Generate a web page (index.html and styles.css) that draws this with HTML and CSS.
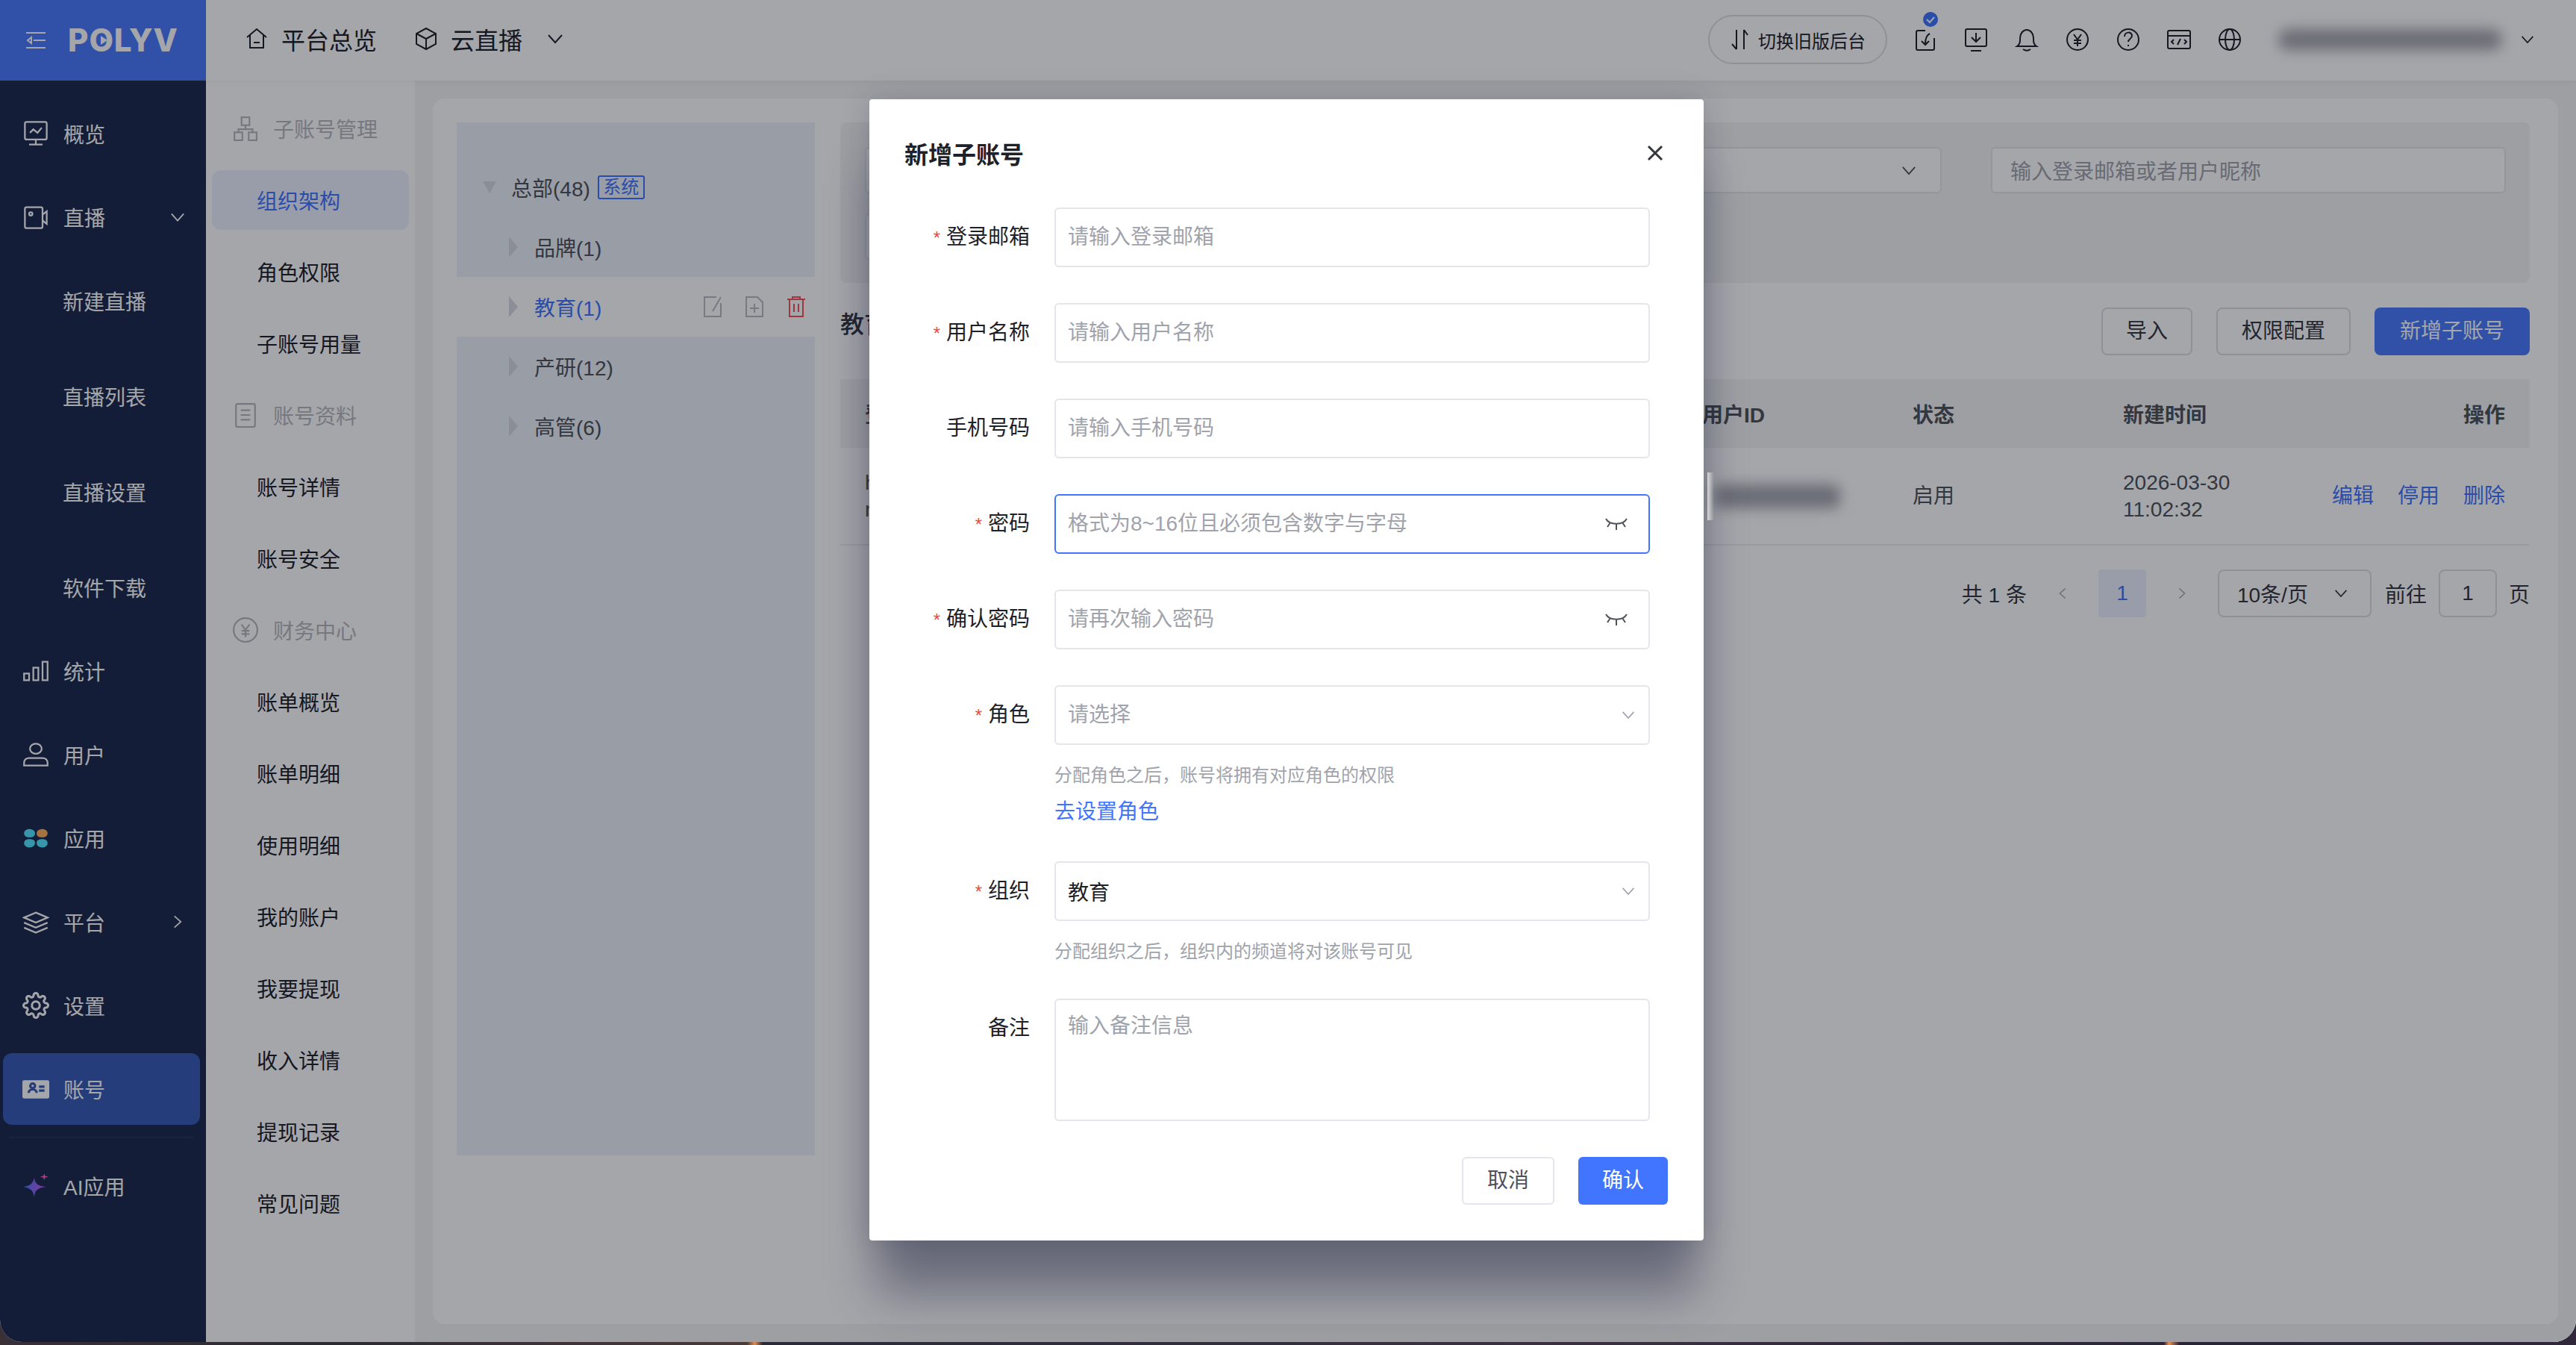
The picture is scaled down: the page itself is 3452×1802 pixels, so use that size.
FILE: index.html
```html
<!DOCTYPE html>
<html>
<head>
    <meta charset="utf-8" />
    <title>子账号管理</title>
    <link rel="stylesheet" href="styles.css">
</head>
<body>
    <svg class="defs" width="0" height="0">
        <defs>
            <symbol id="chev" viewBox="0 0 22 14"><path d="M2 2l9 10 9-10" /></symbol>
            <symbol id="chevr" viewBox="0 0 14 22"><path d="M2 2l10 9-10 9" /></symbol>
            <symbol id="eye" viewBox="0 0 30 18"><path d="M1 2c5 9 23 9 28 0M15 9v8M7 7l-4 6M23 7l4 6" /></symbol>
            <linearGradient id="star" x1="0" y1="0" x2="1" y2="0">
                <stop offset="0" stop-color="#4a7dff" />
                <stop offset="1" stop-color="#d050f0" />
            </linearGradient>
        </defs>
    </svg>

    <div class="window">
        <div class="app">
            <aside class="nav">
                <div class="brand">
                    <svg class="ic-menu" viewBox="0 0 26 22"><path d="M0 1h26M0 21h26M10 11h16M7 7l-5 4 5 4z" /></svg>
                    <span class="logo">POLYV</span>
                </div>
                <div class="nav-list">
                    <div class="nav-item">
                        <svg class="ic" viewBox="0 0 32 32"><rect x="3" y="2" width="26" height="21" rx="2" /><path d="M16 23v6M8 29h16M9 15l4-4 5 4 5-6" /></svg>
                        概览
                    </div>
                    <div class="nav-item">
                        <svg class="ic" viewBox="0 0 32 32"><rect x="3" y="4" width="21" height="25" rx="2" /><circle cx="10" cy="12" r="2" /><path d="M24 13l5-4v15l-5-4" /></svg>
                        直播
                        <svg class="nav-arrow"><use href="#chev" /></svg>
                    </div>
                    <div class="nav-sub">
                        <div class="nav-item sub">新建直播</div>
                        <div class="nav-item sub">直播列表</div>
                        <div class="nav-item sub">直播设置</div>
                        <div class="nav-item sub">软件下载</div>
                    </div>
                    <div class="nav-item">
                        <svg class="ic" viewBox="0 0 32 32"><rect x="2" y="19" width="6" height="8" /><rect x="13" y="12" width="6" height="15" /><rect x="24" y="5" width="6" height="22" /></svg>
                        统计
                    </div>
                    <div class="nav-item">
                        <svg class="ic" viewBox="0 0 32 32"><ellipse cx="16" cy="9" rx="7" ry="6" /><path d="M2 29v-3c0-4 3-6 6-6h16c3 0 6 2 6 6v3z" /></svg>
                        用户
                    </div>
                    <div class="nav-item">
                        <svg class="ic-fill" viewBox="0 0 32 32">
                            <path class="teal" d="M2 10c0-3 3-5 6-5 4 0 7 2 7 5 0 3-1 5-7 5-4 0-6-2-6-5z" />
                            <path class="orange" d="M17 10c0-3 3-5 7-5 3 0 6 2 6 5 0 3-2 5-6 5-6 0-7-2-7-5z" />
                            <path class="teal" d="M2 22c0-3 2-5 6-5 6 0 7 2 7 5 0 3-3 5-7 5-3 0-6-2-6-5z" />
                            <path class="teal" d="M17 22c0-3 1-5 7-5 4 0 6 2 6 5 0 3-3 5-6 5-4 0-7-2-7-5z" />
                        </svg>
                        应用
                    </div>
                    <div class="nav-item">
                        <svg class="ic" viewBox="0 0 32 32"><path d="M16 5l14 6-14 6-14-6zM2 17l14 6 14-6M2 23l14 6 14-6" /></svg>
                        平台
                        <svg class="nav-arrow side"><use href="#chevr" /></svg>
                    </div>
                    <div class="nav-item">
                        <svg class="ic" viewBox="0 0 24 24" stroke-width="1.5"><circle cx="12" cy="12" r="3.5" /><path d="M19.4 15a1.65 1.65 0 0 0 .33 1.82l.06.06a2 2 0 0 1 0 2.83 2 2 0 0 1-2.83 0l-.06-.06a1.65 1.65 0 0 0-1.82-.33 1.65 1.65 0 0 0-1 1.51V21a2 2 0 0 1-2 2 2 2 0 0 1-2-2v-.09A1.65 1.65 0 0 0 9 19.4a1.65 1.65 0 0 0-1.82.33l-.06.06a2 2 0 0 1-2.83 0 2 2 0 0 1 0-2.83l.06-.06a1.65 1.65 0 0 0 .33-1.82 1.65 1.65 0 0 0-1.51-1H3a2 2 0 0 1-2-2 2 2 0 0 1 2-2h.09A1.65 1.65 0 0 0 4.6 9a1.65 1.65 0 0 0-.33-1.82l-.06-.06a2 2 0 0 1 0-2.83 2 2 0 0 1 2.83 0l.06.06a1.65 1.65 0 0 0 1.82.33H9a1.65 1.65 0 0 0 1-1.51V3a2 2 0 0 1 2-2 2 2 0 0 1 2 2v.09a1.65 1.65 0 0 0 1 1.51 1.65 1.65 0 0 0 1.82-.33l.06-.06a2 2 0 0 1 2.83 0 2 2 0 0 1 0 2.83l-.06.06a1.65 1.65 0 0 0-.33 1.82V9a1.65 1.65 0 0 0 1.51 1H21a2 2 0 0 1 2 2 2 2 0 0 1-2 2h-.09a1.65 1.65 0 0 0-1.51 1z" /></svg>
                        设置
                    </div>
                    <div class="nav-item active">
                        <svg class="ic-fill" viewBox="0 0 34 32">
                            <rect class="card" x="0" y="5" width="34" height="23" rx="2" />
                            <path class="card-line" d="M8 21c0-6 10-6 10 0M13 9a3 3 0 1 0 .01 0M21 13h7M21 18h7" />
                        </svg>
                        账号
                    </div>
                    <div class="nav-line"></div>
                    <div class="nav-item">
                        <svg class="ic-fill" viewBox="0 0 32 32">
                            <path fill="url(#star)" d="M14 6c1 7 4 10 14 11-10 1-13 4-14 12-1-8-5-11-13-12 8-1 12-4 13-11z" />
                            <path class="pink" d="M26 1l1 3 4 1-4 1-1 3-1-3-4-1 4-1z" />
                        </svg>
                        AI应用
                    </div>
                </div>
            </aside>

            <div class="main-col">
                <header class="topbar">
                    <div class="top-link">
                        <svg class="ic" viewBox="0 0 32 32"><path d="M3 14L16 3l13 11M7 11v17h18V11M12 21h8" /></svg>
                        平台总览
                    </div>
                    <div class="top-link">
                        <svg class="ic" viewBox="0 0 32 32"><path d="M16 2l13 7v14l-13 7-13-7V9zM3 9l13 7 13-7M16 16v14" /></svg>
                        云直播
                        <svg class="top-arrow"><use href="#chev" /></svg>
                    </div>
                    <div class="top-right">
                        <div class="switch-btn">
                            <svg class="ic-sm" viewBox="0 0 24 30"><path d="M8 2v26M8 28l-6-7M18 28V2M18 2l5 7" /></svg>
                            切换旧版后台
                        </div>
                        <div class="top-icons">
                            <div class="top-icon task">
                                <svg class="ic" viewBox="0 0 32 32"><path d="M16 4H6a2 2 0 0 0-2 2v22a2 2 0 0 0 2 2h20a2 2 0 0 0 2-2V14M22 8c-4 2-6 6-6 14M11 18l5 5 5-5" /></svg>
                                <span class="check">
                                    <svg viewBox="0 0 20 20"><path d="M5 10l4 4 6-7" /></svg>
                                </span>
                            </div>
                            <div class="top-icon">
                                <svg class="ic" viewBox="0 0 32 32"><rect x="2" y="2" width="28" height="23" rx="2" /><path d="M16 7v12M10 13l6 6 6-6M9 31h14" /></svg>
                            </div>
                            <div class="top-icon">
                                <svg class="ic" viewBox="0 0 32 32"><path d="M3 25c3-2 4-4 4-8v-3c0-6 4-11 9-11s9 5 9 11v3c0 4 1 6 4 8zM11 29c3 2 7 2 10 0" /></svg>
                            </div>
                            <div class="top-icon">
                                <svg class="ic" viewBox="0 0 32 32"><circle cx="16" cy="16" r="14" /><path d="M11 9l5 7 5-7M16 16v9M11 17h10M11 21h10" /></svg>
                            </div>
                            <div class="top-icon">
                                <svg class="ic" viewBox="0 0 32 32"><circle cx="16" cy="16" r="14" /><path d="M11 12c0-7 10-7 10-1 0 4-5 4-5 8M16 23v2" /></svg>
                            </div>
                            <div class="top-icon">
                                <svg class="ic" viewBox="0 0 32 32"><rect x="1" y="4" width="30" height="24" rx="2" /><path d="M1 11h30M9 16l-3 3 3 3M23 16l3 3-3 3M18 15l-4 8" /></svg>
                            </div>
                            <div class="top-icon">
                                <svg class="ic" viewBox="0 0 32 32"><circle cx="16" cy="16" r="14" /><ellipse cx="16" cy="16" rx="6" ry="14" /><path d="M2 16h28" /></svg>
                            </div>
                        </div>
                        <div class="user-blur"></div>
                        <svg class="user-arrow"><use href="#chev" /></svg>
                    </div>
                </header>

                <div class="body">
                    <aside class="subnav">
                        <div class="sub-head">
                            <svg class="ic-head" viewBox="0 0 32 32"><rect x="11" y="2" width="10" height="10" /><rect x="2" y="21" width="10" height="10" /><rect x="20" y="21" width="10" height="10" /><path d="M16 12v5M7 21v-4h18v4" /></svg>
                            子账号管理
                        </div>
                        <div class="sub-item active">组织架构</div>
                        <div class="sub-item">角色权限</div>
                        <div class="sub-item">子账号用量</div>
                        <div class="sub-head">
                            <svg class="ic-head" viewBox="0 0 32 32"><rect x="4" y="2" width="24" height="29" rx="2" /><path d="M10 10h12M10 16h12M10 22h12" /></svg>
                            账号资料
                        </div>
                        <div class="sub-item">账号详情</div>
                        <div class="sub-item">账号安全</div>
                        <div class="sub-head">
                            <svg class="ic-head" viewBox="0 0 32 32"><circle cx="16" cy="16" r="15" /><path d="M11 9l5 7 5-7M16 16v9M11 17h10M11 21h10" /></svg>
                            财务中心
                        </div>
                        <div class="sub-item">账单概览</div>
                        <div class="sub-item">账单明细</div>
                        <div class="sub-item">使用明细</div>
                        <div class="sub-item">我的账户</div>
                        <div class="sub-item">我要提现</div>
                        <div class="sub-item">收入详情</div>
                        <div class="sub-item">提现记录</div>
                        <div class="sub-item">常见问题</div>
                    </aside>

                    <main class="content">
                        <div class="panel">
                            <div class="tree">
                                <div class="tree-row root">
                                    <span class="tri down"></span>
                                    总部(48)
                                    <span class="tag">系统</span>
                                </div>
                                <div class="tree-row"><span class="tri"></span>品牌(1)</div>
                                <div class="tree-row current">
                                    <span class="tri"></span>
                                    <span class="tree-name">教育(1)</span>
                                    <span class="tree-tools">
                                        <svg class="ic-tool" viewBox="0 0 26 30"><path d="M24 10v18H2V2h16M24 2L13 21" /></svg>
                                        <svg class="ic-tool" viewBox="0 0 26 30"><path d="M2 2h15l7 7v19H2zM13 11v12M7 17h12" /></svg>
                                        <svg class="ic-tool red" viewBox="0 0 26 30"><path d="M1 5h24M8 5V2h10v3M4 5v23h18V5M10 11v11M16 11v11" /></svg>
                                    </span>
                                </div>
                                <div class="tree-row"><span class="tri"></span>产研(12)</div>
                                <div class="tree-row"><span class="tri"></span>高管(6)</div>
                            </div>

                            <div class="list">
                                <div class="filter">
                                    <div class="filter-row">
                                        <div class="filter-box select">
                                            <svg class="box-arrow"><use href="#chev" /></svg>
                                        </div>
                                        <div class="filter-box search">输入登录邮箱或者用户昵称</div>
                                    </div>
                                    <div class="filter-row">
                                        <div class="filter-box short"></div>
                                    </div>
                                </div>

                                <div class="toolbar">
                                    <div class="list-title">教育</div>
                                    <div class="btn narrow">导入</div>
                                    <div class="btn">权限配置</div>
                                    <div class="btn primary">新增子账号</div>
                                </div>

                                <table class="grid">
                                    <tr>
                                        <th class="c-name">登录邮箱</th>
                                        <th class="c-id">用户ID</th>
                                        <th class="c-state">状态</th>
                                        <th class="c-time">新建时间</th>
                                        <th class="c-act">操作</th>
                                    </tr>
                                    <tr>
                                        <td>h<br />n</td>
                                        <td><div class="id-blur"></div></td>
                                        <td>启用</td>
                                        <td>2026-03-30<br />11:02:32</td>
                                        <td>
                                            <div class="acts"><span>编辑</span><span>停用</span><span>删除</span></div>
                                        </td>
                                    </tr>
                                </table>

                                <div class="pager">
                                    <span class="total">共 1 条</span>
                                    <span class="page-btn"><svg class="page-arrow flip"><use href="#chevr" /></svg></span>
                                    <span class="page-btn on">1</span>
                                    <span class="page-btn"><svg class="page-arrow"><use href="#chevr" /></svg></span>
                                    <span class="page-size">10条/页<svg class="size-arrow"><use href="#chev" /></svg></span>
                                    <span>前往</span>
                                    <span class="page-input">1</span>
                                    <span>页</span>
                                </div>
                            </div>
                        </div>
                    </main>
                </div>
            </div>

            <div class="mask">
                <div class="glare"></div>
                <div class="dialog">
                    <div class="dialog-head">
                        <div class="dialog-title">新增子账号</div>
                        <svg class="dialog-close" viewBox="0 0 22 22"><path d="M2 2l18 18M20 2L2 20" /></svg>
                    </div>
                    <div class="field">
                        <label class="must">登录邮箱</label>
                        <div class="control"><input class="text" placeholder="请输入登录邮箱" /></div>
                    </div>
                    <div class="field">
                        <label class="must">用户名称</label>
                        <div class="control"><input class="text" placeholder="请输入用户名称" /></div>
                    </div>
                    <div class="field">
                        <label>手机号码</label>
                        <div class="control"><input class="text" placeholder="请输入手机号码" /></div>
                    </div>
                    <div class="field">
                        <label class="must">密码</label>
                        <div class="control focus">
                            <input class="text" placeholder="格式为8~16位且必须包含数字与字母" />
                            <svg class="eye"><use href="#eye" /></svg>
                        </div>
                    </div>
                    <div class="field">
                        <label class="must">确认密码</label>
                        <div class="control">
                            <input class="text" placeholder="请再次输入密码" />
                            <svg class="eye"><use href="#eye" /></svg>
                        </div>
                    </div>
                    <div class="field">
                        <label class="must">角色</label>
                        <div class="field-main">
                            <div class="control">
                                <input class="text" placeholder="请选择" />
                                <svg class="drop"><use href="#chev" /></svg>
                            </div>
                            <div class="hint">分配角色之后，账号将拥有对应角色的权限</div>
                            <div class="hint-link">去设置角色</div>
                        </div>
                    </div>
                    <div class="field">
                        <label class="must">组织</label>
                        <div class="field-main">
                            <div class="control">
                                <input class="text" value="教育" />
                                <svg class="drop"><use href="#chev" /></svg>
                            </div>
                            <div class="hint">分配组织之后，组织内的频道将对该账号可见</div>
                        </div>
                    </div>
                    <div class="field">
                        <label>备注</label>
                        <textarea class="note" placeholder="输入备注信息"></textarea>
                    </div>
                    <div class="dialog-foot">
                        <div class="dialog-btn">取消</div>
                        <div class="dialog-btn ok">确认</div>
                    </div>
                </div>
            </div>
        </div>
    </div>
</body>
</html>
```

FILE: styles.css
```css
* {
    box-sizing: border-box;
}

html, body {
    margin: 0;
    height: 100%;
    overflow: hidden;
}

body {
    font-family: "Liberation Sans", "Noto Sans CJK SC", sans-serif;
    font-size: 28px;
    color: #1d2129;
    background: linear-gradient(90deg, #3a3036 0, #2d2a34 13%, #4a3a3a 29%, #e08a50 29.3%, #2b2a38 29.6%, #3a3040 60%, #2b2638 84%, #e8905a 84.2%, #2a2436 84.6%, #30283a 100%);
}

.defs {
    position: absolute;
}

svg {
    flex: none;
    fill: none;
    stroke: currentColor;
    stroke-width: 2;
}

/* window with rounded bottom corners */
.window {
    height: 1798px;
    background: #fff;
    border-radius: 0 0 30px 30px;
    overflow: hidden;
}

.app {
    position: relative;
    display: flex;
    height: 100%;
    border-radius: 0 0 26px 26px;
    overflow: hidden;
}

.ic, .ic-fill {
    width: 32px;
    height: 32px;
}

.ic-fill {
    stroke: none;
}

/* left nav */
.nav {
    flex: none;
    width: 276px;
    background: #1c2a4d;
    color: #fff;
}

.brand {
    display: flex;
    align-items: center;
    gap: 30px;
    height: 108px;
    padding-left: 35px;
    background: #487bfb;
}

.ic-menu {
    width: 26px;
    height: 22px;
}

.logo {
    position: relative;
    font-family: Inter, sans-serif;
    font-size: 42px;
    font-weight: 800;
    line-height: 1;
    letter-spacing: 1px;
}

/* play mark inside the O */
.logo::after {
    content: "";
    position: absolute;
    left: 44px;
    top: 15px;
    border-top: 6px solid transparent;
    border-bottom: 6px solid transparent;
    border-left: 9px solid #fff;
}

.nav-list {
    display: flex;
    flex-direction: column;
    gap: 16px;
    padding-top: 23px;
}

.nav-sub {
    display: flex;
    flex-direction: column;
    gap: 32px;
}

.nav-item {
    display: flex;
    align-items: center;
    gap: 19px;
    height: 96px;
    margin: 0 8px 0 4px;
    padding: 0 20px 0 26px;
    border-radius: 12px;
}

.nav-item .ic, .nav-item .ic-fill {
    width: 36px;
    height: 36px;
}

.nav-item.sub {
    padding-left: 80px;
}

.nav-item.active {
    background: #385cb4;
}

.nav-arrow {
    width: 20px;
    height: 14px;
    margin-left: auto;
}

.nav-arrow.side {
    width: 12px;
    height: 20px;
    margin-right: 4px;
}

.nav-line {
    height: 2px;
    margin: 0 16px 0 12px;
    background: #26345a;
}

.teal {
    fill: #53e7ff;
}

.orange {
    fill: #ffb059;
}

.card {
    fill: #fff;
}

.card-line {
    fill: none;
    stroke: #385cb4;
    stroke-width: 3;
}

.pink {
    fill: #ff5fc8;
}

/* top bar */
.main-col {
    display: flex;
    flex-direction: column;
    flex: 1;
    min-width: 0;
}

.topbar {
    display: flex;
    align-items: center;
    flex: none;
    height: 108px;
    padding: 0 0 2px 52px;
    background: #fff;
    font-size: 32px;
    box-shadow: 0 2px 8px rgba(0, 0, 0, .05);
    position: relative;
}

.top-link {
    display: flex;
    align-items: center;
    gap: 17px;
    margin-right: 50px;
    padding-bottom: 2px;
}

.top-arrow {
    width: 22px;
    height: 14px;
    margin-left: 16px;
}

.top-right {
    display: flex;
    align-items: center;
    margin-left: auto;
    font-size: 24px;
}

.switch-btn {
    display: flex;
    align-items: center;
    gap: 13px;
    width: 240px;
    height: 66px;
    padding-left: 28px;
    border: 2px solid #dcdee3;
    border-radius: 33px;
}

.ic-sm {
    width: 24px;
    height: 30px;
}

.top-icons {
    display: flex;
    gap: 36px;
    margin: 0 49px 0 35px;
}

.top-icon {
    position: relative;
    width: 32px;
    height: 32px;
}

.check {
    position: absolute;
    top: -21px;
    left: 13px;
    width: 20px;
    height: 20px;
    border-radius: 50%;
    background: #4174ff;
    color: #fff;
}

.check svg {
    display: block;
    width: 20px;
    height: 20px;
}

.user-blur {
    width: 300px;
    height: 28px;
    background: #a4a6ad;
    border-radius: 14px;
    filter: blur(9px);
}

.user-arrow {
    width: 18px;
    height: 12px;
    margin: 0 56px 0 25px;
}

/* second nav */
.body {
    display: flex;
    flex: 1;
    min-height: 0;
    background: #f4f4f4;
}

.subnav {
    display: flex;
    flex-direction: column;
    flex: none;
    width: 280px;
    padding-top: 16px;
    background: #fff;
}

.sub-head {
    display: flex;
    align-items: center;
    gap: 20px;
    height: 96px;
    padding-left: 36px;
    color: #b6b8be;
}

.ic-head {
    width: 34px;
    height: 34px;
}

.sub-item {
    display: flex;
    align-items: center;
    flex: none;
    height: 80px;
    margin: 8px;
    padding-left: 60px;
    border-radius: 12px;
}

.sub-item.active {
    background: #edf1ff;
    color: #4174ff;
}

/* content */
.content {
    flex: 1;
    min-width: 0;
    padding: 24px;
}

.panel {
    display: flex;
    gap: 34px;
    height: 100%;
    padding: 32px 38px 0 32px;
    background: #fff;
    border-radius: 16px;
}

.tree {
    flex: none;
    width: 480px;
    height: 1384px;
    padding-top: 47px;
    background: #edf1f8;
}

.tree-row {
    display: flex;
    align-items: center;
    height: 80px;
    padding-left: 70px;
    color: #4e5258;
    white-space: nowrap;
}

.tree-row.root {
    padding-left: 35px;
}

.tree-row.current {
    background: #fff;
}

.tree-name {
    color: #4174ff;
}

.tri {
    flex: none;
    width: 0;
    height: 0;
    margin-right: 22px;
    border-top: 14px solid transparent;
    border-bottom: 14px solid transparent;
    border-left: 12px solid #d6d9e0;
}

.tri.down {
    margin-right: 20px;
    border-top: 16px solid #d6d9e0;
    border-bottom: 0;
    border-left: 9px solid transparent;
    border-right: 9px solid transparent;
}

.tag {
    width: 63px;
    height: 32px;
    margin-left: 10px;
    line-height: 27px;
    font-size: 24px;
    text-align: center;
    color: #4174ff;
    border: 2px solid #4174ff;
    border-radius: 3px;
}

.tree-tools {
    display: flex;
    gap: 30px;
    margin-left: auto;
    padding-right: 12px;
    color: #b8bac0;
}

.ic-tool {
    width: 26px;
    height: 30px;
}

.ic-tool.red {
    color: #f5525a;
}

/* list */
.list {
    flex: 1;
    min-width: 0;
}

.filter {
    height: 215px;
    padding: 33px 32px 0 33px;
    background: #f3f4f5;
    border-radius: 8px;
}

.filter-row {
    display: flex;
    gap: 66px;
    margin-bottom: 27px;
}

.filter-box {
    display: flex;
    align-items: center;
    height: 62px;
    padding: 0 24px;
    background: #fff;
    border: 2px solid #e5e6eb;
    border-radius: 6px;
    color: #a0a3ab;
}

.filter-box.select {
    justify-content: flex-end;
    width: 1443px;
    padding-right: 32px;
}

.filter-box.search {
    flex: 1;
}

.filter-box.short {
    width: 300px;
}

.box-arrow {
    width: 20px;
    height: 13px;
    color: #4e5258;
}

.toolbar {
    display: flex;
    align-items: flex-start;
    gap: 32px;
    margin-top: 33px;
}

.list-title {
    margin-right: auto;
    font-size: 32px;
    line-height: 46px;
    font-weight: 500;
    color: #33363d;
}

.btn {
    height: 64px;
    padding: 0 32px;
    line-height: 60px;
    border: 2px solid #dcdee3;
    border-radius: 8px;
    color: #33363d;
}

.btn.narrow {
    padding: 0 31px;
}

.btn.primary {
    padding: 0 34px;
    line-height: 64px;
    border: 0;
    background: #487bfb;
    color: #fff;
}

.grid {
    width: 100%;
    margin-top: 32px;
    border-collapse: collapse;
    table-layout: fixed;
    color: #4e5258;
}

.grid th, .grid td {
    padding: 0 33px;
    text-align: left;
    white-space: nowrap;
}

.grid th {
    height: 92px;
    background: #f3f4f5;
    font-weight: 600;
}

.grid td {
    height: 130px;
    line-height: 36px;
    border-bottom: 2px solid #eceef1;
}

.c-name {
    width: 1122px;
}

.c-id, .c-state {
    width: 282px;
}

.c-time {
    width: 288px;
}

.grid .c-act {
    text-align: right;
}

.acts {
    display: flex;
    justify-content: flex-end;
    gap: 32px;
    color: #4174ff;
}

.id-blur {
    width: 170px;
    height: 32px;
    margin-left: 15px;
    background: #a4a6ad;
    border-radius: 10px;
    filter: blur(9px);
}

.pager {
    display: flex;
    justify-content: flex-end;
    align-items: center;
    gap: 16px;
    margin-top: 32px;
    color: #33363d;
}

.page-btn {
    display: flex;
    justify-content: center;
    align-items: center;
    width: 64px;
    height: 64px;
    border-radius: 4px;
    color: #a0a3ab;
}

.page-btn.on {
    background: #edf1ff;
    color: #4174ff;
}

.page-arrow {
    width: 10px;
    height: 18px;
}

.page-arrow.flip {
    transform: scaleX(-1);
}

.page-size {
    display: flex;
    align-items: center;
    width: 206px;
    height: 64px;
    margin-right: 2px;
    padding: 0 30px 0 24px;
    border: 2px solid #dcdee3;
    border-radius: 8px;
}

.size-arrow {
    width: 18px;
    height: 12px;
    margin-left: auto;
}

.page-input {
    width: 78px;
    height: 64px;
    line-height: 60px;
    text-align: center;
    border: 2px solid #dcdee3;
    border-radius: 8px;
}

/* dialog */
.mask {
    position: absolute;
    inset: 0;
    display: flex;
    justify-content: center;
    align-items: flex-start;
    padding: 133px 4px 0 0;
    background: rgba(5, 8, 20, .36);
}

/* bright sliver beside the blurred id */
.glare {
    position: absolute;
    left: 2288px;
    top: 633px;
    width: 9px;
    height: 64px;
    background: linear-gradient(90deg, #d8d8da, rgba(216, 216, 218, 0));
}

.dialog {
    width: 1118px;
    height: 1529px;
    background: #fff;
    border-radius: 4px;
    box-shadow: 0 80px 60px -10px rgba(24, 28, 60, .42), 0 0 40px rgba(24, 28, 56, .2);
}

.dialog-head {
    display: flex;
    justify-content: space-between;
    align-items: center;
    height: 145px;
    padding: 0 54px 2px 47px;
}

.dialog-title {
    font-size: 32px;
    font-weight: 600;
}

.dialog-close {
    width: 22px;
    height: 22px;
    stroke-width: 3;
    color: #33363d;
}

.field {
    display: flex;
    align-items: flex-start;
    gap: 33px;
    margin-bottom: 48px;
}

.field label {
    flex: none;
    width: 215px;
    height: 80px;
    line-height: 80px;
    text-align: right;
}

.must::before {
    content: "*";
    margin-right: 8px;
    font-size: 24px;
    color: #f5453d;
}

.field-main {
    width: 798px;
}

.control {
    display: flex;
    align-items: center;
    width: 798px;
    height: 80px;
    padding-right: 28px;
    border: 2px solid #e5e6eb;
    border-radius: 6px;
}

.control.focus {
    border-color: #4174ff;
}

.text {
    flex: 1;
    min-width: 0;
    height: 100%;
    padding: 0 0 0 16px;
    border: 0;
    outline: 0;
    background: none;
    font: inherit;
    color: #1d2129;
}

.text::placeholder, .note::placeholder {
    color: #a0a3ab;
    opacity: 1;
}

.eye {
    width: 30px;
    height: 18px;
    color: #4e5258;
}

.drop {
    width: 18px;
    height: 12px;
    margin-right: -10px;
    color: #a0a3ab;
}

.hint {
    margin-top: 23px;
    line-height: 36px;
    font-size: 24px;
    color: #a0a3ab;
}

.hint-link {
    margin: 11px 0 -2px;
    line-height: 40px;
    color: #4174ff;
}

.field-main .hint:last-child {
    margin-bottom: -3px;
}

.note {
    width: 798px;
    height: 164px;
    padding: 12px 16px;
    border: 2px solid #e5e6eb;
    border-radius: 6px;
    outline: 0;
    resize: none;
    font: inherit;
}

.dialog-foot {
    display: flex;
    justify-content: flex-end;
    gap: 32px;
    padding-right: 48px;
}

.dialog-btn {
    width: 124px;
    height: 64px;
    line-height: 60px;
    text-align: center;
    border: 2px solid #e5e6eb;
    border-radius: 6px;
    color: #4e5258;
}

.dialog-btn.ok {
    width: 120px;
    line-height: 64px;
    border: 0;
    background: #4174ff;
    color: #fff;
}
```
